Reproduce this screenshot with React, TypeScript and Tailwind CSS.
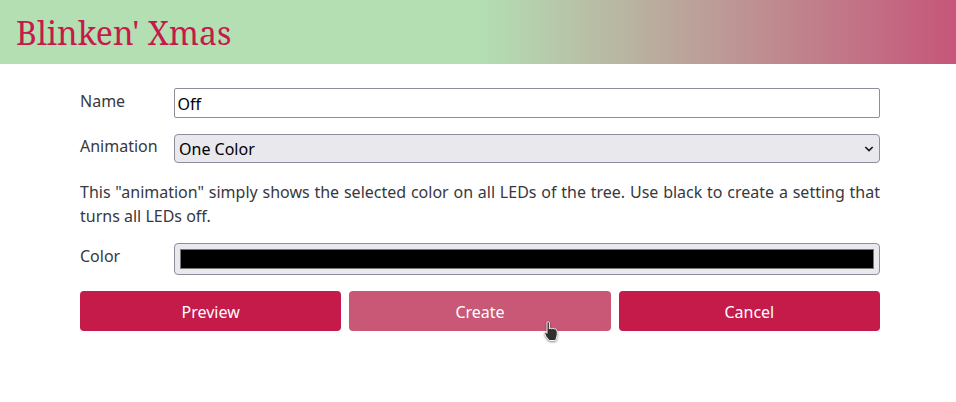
function HandCursor() {
  return (
    <svg
      className="absolute left-[543px] top-[320px] drop-shadow-[0_1px_1px_rgba(0,0,0,0.45)]"
      width="19"
      height="23"
      viewBox="0 0 19 23"
    >
      <path
        d="M4 2.800c0-1.400 2.400-1.400 2.400 0V9c.5-1 2-1 2.300 0 .5-.8 2.100-.8 2.300.2.500-.7 2.300-.6 2.500.6.900 1.600 1.100 4.300.2 6.900L12.700 20.500H6.200L3 16.500 1.800 13.800c-.5-1.200.9-2 1.800-1L4 13.300Z"
        fill="#303030"
        stroke="#f4f4f4"
        strokeWidth="1"
        strokeLinejoin="round"
      />
    </svg>
  );
}

export default function App() {
  return (
    <div className="relative min-h-[402px] bg-white font-['Noto_Sans',sans-serif] text-base text-[#383840]">
      <header className="flex h-16 items-center bg-[linear-gradient(90deg,#b3dfb3_50%,#c6567a_100%)] px-4 pt-0.5">
        <h1 className="font-['Noto_Serif','DejaVu_Serif',serif] text-[32px] text-[#c41b4a]">Blinken' Xmas</h1>
      </header>

      <form className="ml-20 flex w-[800px] flex-col pt-6">
        <div className="flex items-start">
          <label className="w-[94px] pt-px leading-6">Name</label>
          <input
            className="h-[30px] flex-1 rounded-[2px] border border-[#8f8d9d] px-[2px] pt-0.5 pl-[2.500px] text-black outline-none"
            defaultValue="Off"
          />
        </div>

        <div className="mt-4 flex items-start">
          <label className="w-[94px] leading-6">Animation</label>
          <div className="relative flex-1">
            <select className="h-[29px] w-full appearance-none rounded-[4px] border border-[#8f8d9d] bg-[#e9e8ed] pl-1 text-black outline-none">
              <option>One Color</option>
            </select>
            <svg className="pointer-events-none absolute right-[6px] top-[12px]" width="10" height="6" viewBox="0 0 10 6">
              <path d="M1.300 1 5 4.500 8.700 1" fill="none" stroke="#1a1a1a" strokeWidth="1.700" />
            </svg>
          </div>
        </div>

        <p className="mt-[17px] text-justify leading-6">
          This "animation" simply shows the selected color on all LEDs of the tree. Use black to create a setting that
          turns all LEDs off.
        </p>

        <div className="mt-[15px] flex items-start">
          <label className="w-[94px] pt-px leading-6">Color</label>
          <div className="flex h-8 flex-1 rounded-[4px] border border-[#8f8d9d] bg-[#e9e8ed] p-[5px]">
            <div className="flex-1 border border-[#777] bg-black" />
          </div>
        </div>

        <div className="mt-4 grid grid-cols-3 gap-2">
          <button type="button" className="h-10 rounded-[4px] bg-[#c41b4a] pt-0.5 text-white">
            Preview
          </button>
          <button type="button" className="h-10 rounded-[4px] bg-[#c95877] pt-0.5 text-white">
            Create
          </button>
          <button type="button" className="h-10 rounded-[4px] bg-[#c41b4a] pt-0.5 text-white">
            Cancel
          </button>
        </div>
      </form>

      <HandCursor />
    </div>
  );
}
